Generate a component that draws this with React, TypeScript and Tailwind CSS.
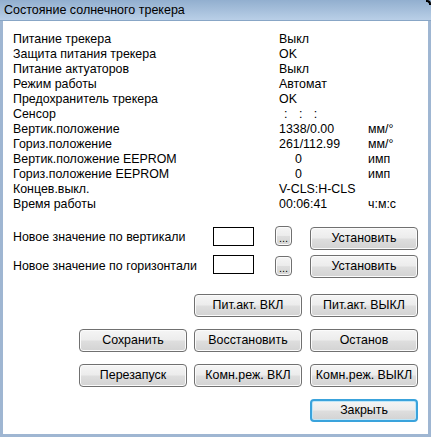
const rows: [string, string, string, string?][] = [
  ['Питание трекера', 'Выкл', ''],
  ['Защита питания трекера', 'OK', ''],
  ['Питание актуаторов', 'Выкл', ''],
  ['Режим работы', 'Автомат', ''],
  ['Предохранитель трекера', 'OK', ''],
  ['Сенсор', 'sensor', ''],
  ['Вертик.положение', '1338/0.00', 'мм/°'],
  ['Гориз.положение', '261/112.99', 'мм/°'],
  ['Вертик.положение EEPROM', '0', 'имп', 'pad'],
  ['Гориз.положение EEPROM', '0', 'имп', 'pad'],
  ['Концев.выкл.', 'V-CLS:H-CLS', ''],
  ['Время работы', '00:06:41', 'ч:м:с'],
]

const Btn = ({ label, primary }: { label: string; primary?: boolean }) => (
  <button
    className={
      'w-[108px] h-[23px] rounded-[4px] text-[12.4px] text-black leading-none bg-[linear-gradient(#f5f5f5_0%,#ececec_48%,#dedede_52%,#d3d3d3_100%)] ' +
      (primary
        ? 'border-2 border-[#3aa3dc] shadow-[inset_0_0_0_1px_#bfe6f8]'
        : 'border border-[#707070] shadow-[inset_0_0_0_1px_#fbfbfb]')
    }
  >
    {label}
  </button>
)

const Dots = () => (
  <button className="w-[17px] h-[20px] rounded-[4px] border border-[#707070] shadow-[inset_0_0_0_1px_#fbfbfb] bg-[linear-gradient(#f5f5f5_0%,#ececec_48%,#dedede_52%,#d3d3d3_100%)] text-[11px] leading-none pt-[4px] text-black">
    ...
  </button>
)

const App = () => {
  return (
    <div className="w-[433px] h-[438px] bg-white font-['Liberation_Sans',Arial,sans-serif] text-black">
      <div className="relative w-[431px] h-[437px] flex flex-col">
        <div className="h-[21px] shrink-0 bg-[linear-gradient(#92afcf,#b9cfe7)] border-b border-[#88a6c6] pl-[4px] text-[12.5px] leading-[20px]">
          Состояние солнечного трекера
        </div>
        <div className="absolute right-0 top-0 w-[5px] h-[5px] border-t-2 border-r-2 border-black rounded-tr-[4px]" />
        <div className="flex-1 border-x-[3px] border-b-[3px] border-[#9fb6d2] pl-[10px] pr-[10px] pt-[11px] text-[12.4px]">
          <div className="flex flex-col">
            {rows.map(([label, value, unit, pad]) => (
              <div key={label} className="flex h-[15px] leading-[15px]">
                <div className="w-[266px]">{label}</div>
                <div className={'w-[89px] ' + (pad ? 'pl-[16px]' : '')}>
                  {value === 'sensor' ? (
                    <span className="pl-[5px] tracking-[4px]">: : :</span>
                  ) : (
                    value
                  )}
                </div>
                <div>{unit}</div>
              </div>
            ))}
          </div>

          <div className="flex mt-[14px] h-[24px]">
            <div className="w-[200px] pt-[2px]">Новое значение по вертикали</div>
            <div className="w-[41px] h-[19px] mt-[1px] border border-black bg-white" />
            <div className="ml-[21px]">
              <Dots />
            </div>
            <div className="ml-[18px] mt-[1px]">
              <Btn label="Установить" />
            </div>
          </div>
          <div className="flex mt-[5px] h-[24px]">
            <div className="w-[200px] pt-[2px]">Новое значение по горизонтали</div>
            <div className="w-[41px] h-[19px] border border-black bg-white" />
            <div className="ml-[21px] mt-[1px]">
              <Dots />
            </div>
            <div className="ml-[18px]">
              <Btn label="Установить" />
            </div>
          </div>

          <div className="flex flex-col items-end gap-[12px] mt-[15px]">
            <div className="flex gap-[8px]">
              <Btn label="Пит.акт. ВКЛ" />
              <Btn label="Пит.акт. ВЫКЛ" />
            </div>
            <div className="flex gap-[7px]">
              <Btn label="Сохранить" />
              <Btn label="Восстановить" />
              <div className="ml-[1px]">
                <Btn label="Останов" />
              </div>
            </div>
            <div className="flex gap-[7px]">
              <Btn label="Перезапуск" />
              <Btn label="Комн.реж. ВКЛ" />
              <div className="ml-[1px]">
                <Btn label="Комн.реж. ВЫКЛ" />
              </div>
            </div>
            <Btn label="Закрыть" primary />
          </div>
        </div>
      </div>
    </div>
  )
}

export default App
